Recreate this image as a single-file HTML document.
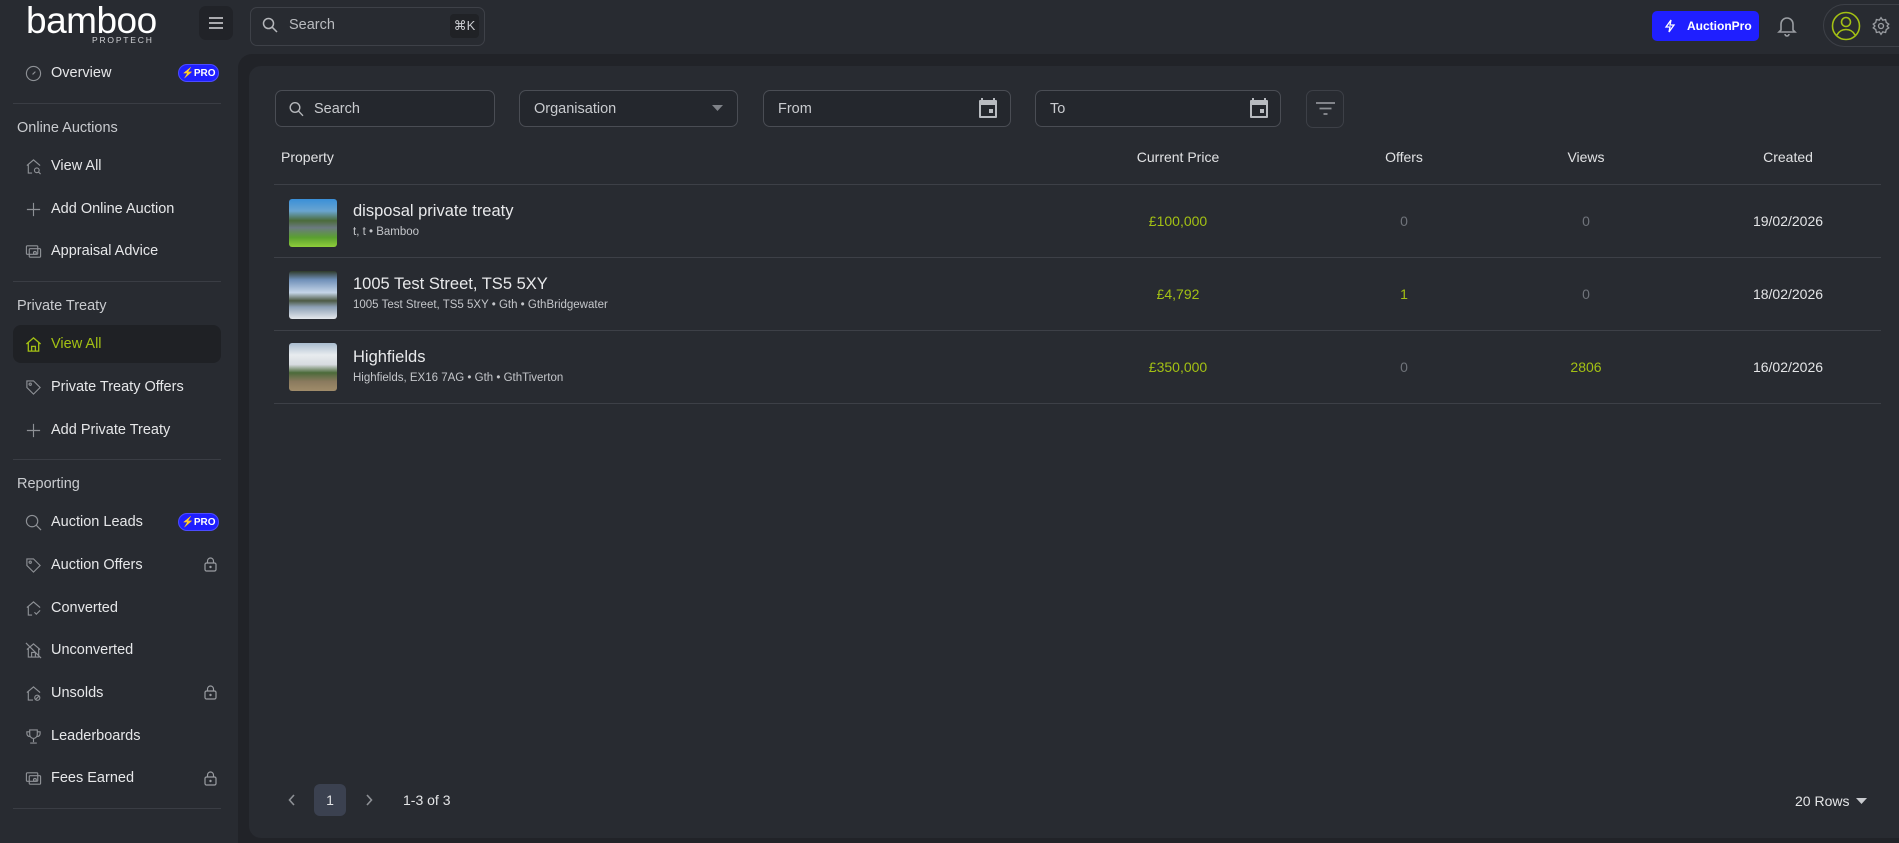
<!DOCTYPE html>
<html><head><meta charset="utf-8">
<style>
*{box-sizing:border-box;margin:0;padding:0}
body{width:1899px;height:843px;overflow:hidden;background:#282b31;font-family:"Liberation Sans",sans-serif;color:#e4e5e7;position:relative}
.a{position:absolute}
.nav{position:absolute;left:13px;width:208px;height:38px;display:flex;align-items:center;padding-left:12px;font-size:14.5px;color:#e6e7e9}
.nav svg{width:17px;height:17px;margin-right:9px;flex:none}
.sec{position:absolute;left:17px;font-size:14.5px;color:#c9cbcf}
.div{position:absolute;left:13px;width:208px;height:1px;background:#3a3d44}
.pro{position:absolute;left:178px;width:41px;height:18px;border-radius:9px;background:#1f1fff;border:1px solid #4c4cff;color:#fff;font-size:10px;font-weight:bold;display:flex;align-items:center;justify-content:center}
.lock{position:absolute;left:204px;width:13px;height:15px}
.inp{position:absolute;top:90px;height:37px;border:1px solid #4a4d54;border-radius:7px;background:#24272d;font-size:14.5px;color:#c9cbcf;display:flex;align-items:center}
.th{position:absolute;top:149px;font-size:14px;color:#e1e2e4}
.line{position:absolute;left:274px;width:1607px;height:1px;background:#3d4047}
.thumb{position:absolute;left:289px;width:48px;height:48px;border-radius:3px}
.t{position:absolute;left:353px;font-size:16.5px;color:#e8e9eb}
.s{position:absolute;left:353px;font-size:11.5px;color:#c4c6ca}
.c{position:absolute;font-size:14px;transform:translateX(-50%)}
.g{color:#a3c014}.m{color:#6f737a}
</style></head><body>
<!-- logo -->
<div class="a" style="left:26px;top:0px;font-size:37px;font-weight:normal;color:#fff;letter-spacing:-0.5px;">bamboo</div>
<div class="a" style="left:92px;top:35px;font-size:8.5px;letter-spacing:1.8px;color:#cfd0d3">PROPTECH</div>
<div class="a" style="left:199px;top:6px;width:34px;height:34px;border-radius:7px;background:#212328"></div>
<svg class="a" style="left:207px;top:14px" width="18" height="18" viewBox="0 0 18 18" stroke="#d7d8db" stroke-width="1.6"><path d="M2 4h14M2 9h14M2 14h14"/></svg>
<div class="a" style="left:250px;top:7px;width:235px;height:39px;border:1px solid #3e4148;border-radius:7px"></div>
<svg class="a" style="left:262px;top:17px" width="16" height="16" viewBox="0 0 16 16" fill="none" stroke="#b5b7bb" stroke-width="1.5"><circle cx="6.5" cy="6.5" r="5"/><path d="M10.3 10.3L15 15"/></svg>
<div class="a" style="left:289px;top:17px;font-size:14.5px;color:#b9bbbf">Search</div>
<div class="a" style="left:450px;top:14px;width:29px;height:24px;border-radius:4px;background:#202226;font-size:13px;color:#c9cbcf;display:flex;align-items:center;justify-content:center">⌘K</div>

<!-- top right -->
<div class="a" style="left:1652px;top:11px;width:107px;height:30px;border-radius:5px;background:#1f1fff;color:#fff;font-weight:bold;font-size:12px;display:flex;align-items:center;padding-left:12px">
<svg width="12" height="14" viewBox="0 0 12 14" fill="none" stroke="#fff" stroke-width="1.3" style="margin-right:11px"><path d="M7 1L2 8h4l-1 5 5-7H6z"/></svg>AuctionPro</div>
<svg class="a" style="left:1777px;top:15px" width="20" height="22" viewBox="0 0 20 22" fill="none" stroke="#9a9da2" stroke-width="1.6"><path d="M4 15V9a6 6 0 0112 0v6l2 2H2z"/><path d="M8 19a2 2 0 004 0"/></svg>
<div class="a" style="left:1823px;top:4px;width:100px;height:43px;border:1px solid #3d4047;border-radius:22px"></div>
<svg class="a" style="left:1831px;top:11px" width="30" height="30" viewBox="0 0 30 30" fill="none" stroke="#a3c014" stroke-width="1.6"><circle cx="15" cy="15" r="13.5"/><circle cx="15" cy="11" r="4.5"/><path d="M6 24c2-4 5-5.5 9-5.5s7 1.5 9 5.5"/></svg>
<svg class="a" style="left:1871px;top:16px" width="20" height="20" viewBox="0 0 24 24" fill="none" stroke="#9a9da2" stroke-width="1.6"><circle cx="12" cy="12" r="3"/><path d="M12 2l2 3 3.5-.8.8 3.5 3 2-2 2.3 2 2.3-3 2-.8 3.5-3.5-.8-2 3-2-3-3.5.8-.8-3.5-3-2 2-2.3-2-2.3 3-2 .8-3.5 3.5.8z"/></svg>

<!-- sidebar -->
<div class="nav" style="top:54px"><svg viewBox="0 0 18 18" fill="none" stroke="#8e9196" stroke-width="1.2"><circle cx="9" cy="9" r="7.5"/><path d="M8 10l3-3"/></svg>Overview</div>
<div class="pro" style="top:64px">⚡PRO</div>
<div class="div" style="top:103px"></div>
<div class="sec" style="top:120px">Online Auctions</div>
<div class="nav" style="top:147px"><svg viewBox="0 0 18 18" fill="none" stroke="#8e9196" stroke-width="1.2"><path d="M2 8l7-6 7 6M3.5 7v9h4"/><circle cx="12.5" cy="13" r="2.5"/><path d="M14.3 14.8L16.5 17"/></svg>View All</div>
<div class="nav" style="top:190px"><svg viewBox="0 0 18 18" fill="none" stroke="#8e9196" stroke-width="1.2"><path d="M9 2v14M2 9h14"/></svg>Add Online Auction</div>
<div class="nav" style="top:232px"><svg viewBox="0 0 18 18" fill="none" stroke="#8e9196" stroke-width="1.2"><rect x="1.5" y="3" width="12" height="9" rx="1"/><rect x="4.5" y="6" width="12" height="9" rx="1"/><circle cx="10.5" cy="10.5" r="1.5"/></svg>Appraisal Advice</div>
<div class="div" style="top:281px"></div>
<div class="sec" style="top:298px">Private Treaty</div>
<div class="a" style="left:13px;top:325px;width:208px;height:38px;border-radius:8px;background:#1f2125"></div>
<div class="nav" style="top:325px;color:#a3c014"><svg viewBox="0 0 18 18" fill="none" stroke="#a3c014" stroke-width="1.4"><path d="M1.5 8.5L9 2l7.5 6.5M3.5 7v9h11V7M7 16v-5h4v5"/></svg>View All</div>
<div class="nav" style="top:368px"><svg viewBox="0 0 18 18" fill="none" stroke="#8e9196" stroke-width="1.2"><path d="M2 2h7l7 7-7 7-7-7z"/><circle cx="5.5" cy="5.5" r="1.2"/></svg>Private Treaty Offers</div>
<div class="nav" style="top:411px"><svg viewBox="0 0 18 18" fill="none" stroke="#8e9196" stroke-width="1.2"><path d="M9 2v14M2 9h14"/></svg>Add Private Treaty</div>
<div class="div" style="top:459px"></div>
<div class="sec" style="top:476px">Reporting</div>
<div class="nav" style="top:503px"><svg viewBox="0 0 18 18" fill="none" stroke="#8e9196" stroke-width="1.2"><circle cx="7.5" cy="7.5" r="6"/><path d="M12 12l5 5"/></svg>Auction Leads</div>
<div class="pro" style="top:513px">⚡PRO</div>
<div class="nav" style="top:546px"><svg viewBox="0 0 18 18" fill="none" stroke="#8e9196" stroke-width="1.2"><path d="M2 2h7l7 7-7 7-7-7z"/><circle cx="5.5" cy="5.5" r="1.2"/></svg>Auction Offers</div>
<div class="nav" style="top:589px"><svg viewBox="0 0 18 18" fill="none" stroke="#8e9196" stroke-width="1.2"><path d="M2 8l7-6 7 6M3.5 7v9h4M10 13l2 2 4-4"/></svg>Converted</div>
<div class="nav" style="top:631px"><svg viewBox="0 0 18 18" fill="none" stroke="#8e9196" stroke-width="1.2"><path d="M2 8l7-6 7 6M3.5 7v9h11V7M7 16v-5h4v5M1 1l16 16"/></svg>Unconverted</div>
<div class="nav" style="top:674px"><svg viewBox="0 0 18 18" fill="none" stroke="#8e9196" stroke-width="1.2"><path d="M2 8l7-6 7 6M3.5 7v9h5"/><circle cx="13" cy="13.5" r="2.7"/><path d="M11.2 15.3l3.6-3.6"/></svg>Unsolds</div>
<div class="nav" style="top:717px"><svg viewBox="0 0 18 18" fill="none" stroke="#8e9196" stroke-width="1.2"><path d="M5 2h8v5a4 4 0 01-8 0zM5 4H2v2a3 3 0 003 3M13 4h3v2a3 3 0 01-3 3M9 11v4M5.5 16h7"/></svg>Leaderboards</div>
<div class="nav" style="top:759px"><svg viewBox="0 0 18 18" fill="none" stroke="#8e9196" stroke-width="1.2"><rect x="1.5" y="3" width="12" height="9" rx="1"/><rect x="4.5" y="6" width="12" height="9" rx="1"/><circle cx="10.5" cy="10.5" r="1.5"/></svg>Fees Earned</div>
<svg class="lock" style="top:557px" viewBox="0 0 13 15" fill="none" stroke="#9a9da2" stroke-width="1.2"><rect x="1" y="6" width="11" height="8" rx="1.5"/><path d="M3.5 6V4a3 3 0 016 0v2"/><circle cx="6.5" cy="10" r=".6" fill="#9a9da2"/></svg>
<svg class="lock" style="top:685px" viewBox="0 0 13 15" fill="none" stroke="#9a9da2" stroke-width="1.2"><rect x="1" y="6" width="11" height="8" rx="1.5"/><path d="M3.5 6V4a3 3 0 016 0v2"/><circle cx="6.5" cy="10" r=".6" fill="#9a9da2"/></svg>
<svg class="lock" style="top:771px" viewBox="0 0 13 15" fill="none" stroke="#9a9da2" stroke-width="1.2"><rect x="1" y="6" width="11" height="8" rx="1.5"/><path d="M3.5 6V4a3 3 0 016 0v2"/><circle cx="6.5" cy="10" r=".6" fill="#9a9da2"/></svg>
<div class="div" style="top:808px"></div>

<!-- main -->
<div class="a" style="left:238px;top:54px;width:1661px;height:789px;background:#212328;border-radius:14px 0 0 0"></div>
<div class="a" style="left:249px;top:66px;width:1650px;height:772px;background:#282b31;border-radius:12px 0 0 12px"></div>

<div class="inp" style="left:275px;width:220px;padding-left:38px">Search</div>
<svg class="a" style="left:289px;top:101px" width="15" height="16" viewBox="0 0 15 16" fill="none" stroke="#b5b7bb" stroke-width="1.4"><circle cx="6" cy="6.5" r="4.8"/><path d="M9.6 10.2L14 14.8"/></svg>
<div class="inp" style="left:519px;width:219px;padding-left:14px">Organisation</div>
<svg class="a" style="left:712px;top:105px" width="11" height="7" viewBox="0 0 11 7"><path d="M0 0h11L5.5 6z" fill="#7f8288"/></svg>
<div class="inp" style="left:763px;width:248px;padding-left:14px">From</div>
<div class="inp" style="left:1035px;width:246px;padding-left:14px">To</div>
<svg class="a" style="left:979px;top:98px" width="18" height="20" viewBox="0 0 18 20"><path d="M4 0v2h10V0h2v2h1a1 1 0 011 1v16a1 1 0 01-1 1H1a1 1 0 01-1-1V3a1 1 0 011-1h1V0zM2 7v11h14V7zm8 4h4v4h-4z" fill="#b8bbc0"/></svg>
<svg class="a" style="left:1250px;top:98px" width="18" height="20" viewBox="0 0 18 20"><path d="M4 0v2h10V0h2v2h1a1 1 0 011 1v16a1 1 0 01-1 1H1a1 1 0 01-1-1V3a1 1 0 011-1h1V0zM2 7v11h14V7zm8 4h4v4h-4z" fill="#b8bbc0"/></svg>
<div class="a" style="left:1306px;top:90px;width:38px;height:38px;border:1px solid #3d4047;border-radius:7px"></div>
<svg class="a" style="left:1316px;top:102px" width="19" height="13" viewBox="0 0 19 13" stroke="#8e9196" stroke-width="1.7"><path d="M0 1h19M3.5 6.5h12M7.5 12h4"/></svg>

<div class="th" style="left:281px">Property</div>
<div class="th" style="left:1178px;transform:translateX(-50%)">Current Price</div>
<div class="th" style="left:1404px;transform:translateX(-50%)">Offers</div>
<div class="th" style="left:1586px;transform:translateX(-50%)">Views</div>
<div class="th" style="left:1788px;transform:translateX(-50%)">Created</div>
<div class="line" style="top:184px"></div>
<div class="line" style="top:257px"></div>
<div class="line" style="top:330px"></div>
<div class="line" style="top:403px"></div>

<div class="thumb" style="top:199px;background:linear-gradient(180deg,#3a8fd8 0%,#6aa5d0 25%,#4b6b3a 45%,#6b7a80 60%,#5aa030 80%,#8fce3a 100%)"></div>
<div class="t" style="top:202px">disposal private treaty</div>
<div class="s" style="top:226px">t, t • Bamboo</div>
<div class="c g" style="left:1178px;top:213px">£100,000</div>
<div class="c m" style="left:1404px;top:213px">0</div>
<div class="c m" style="left:1586px;top:213px">0</div>
<div class="c" style="left:1788px;top:213px">19/02/2026</div>

<div class="thumb" style="top:271px;background:linear-gradient(180deg,#2f3a2a 0%,#6f8fb8 18%,#c5d5e8 45%,#4d5a45 62%,#8da0b5 75%,#e5e8ec 100%)"></div>
<div class="t" style="top:275px">1005 Test Street, TS5 5XY</div>
<div class="s" style="top:299px">1005 Test Street, TS5 5XY • Gth • GthBridgewater</div>
<div class="c g" style="left:1178px;top:286px">£4,792</div>
<div class="c g" style="left:1404px;top:286px">1</div>
<div class="c m" style="left:1586px;top:286px">0</div>
<div class="c" style="left:1788px;top:286px">18/02/2026</div>

<div class="thumb" style="top:343px;background:linear-gradient(180deg,#a9bccf 0%,#e8ecef 25%,#d7dbe0 45%,#4c6a3a 62%,#8a7a5e 80%,#a08c6a 100%)"></div>
<div class="t" style="top:348px">Highfields</div>
<div class="s" style="top:372px">Highfields, EX16 7AG • Gth • GthTiverton</div>
<div class="c g" style="left:1178px;top:359px">£350,000</div>
<div class="c m" style="left:1404px;top:359px">0</div>
<div class="c g" style="left:1586px;top:359px">2806</div>
<div class="c" style="left:1788px;top:359px">16/02/2026</div>

<!-- pagination -->
<svg class="a" style="left:288px;top:794px" width="8" height="12" viewBox="0 0 8 12" fill="none" stroke="#8e9196" stroke-width="1.6"><path d="M6 1L1.5 6 6 11"/></svg>
<div class="a" style="left:314px;top:784px;width:32px;height:32px;border-radius:6px;background:#3b4150;display:flex;align-items:center;justify-content:center;font-size:14px">1</div>
<svg class="a" style="left:365px;top:794px" width="8" height="12" viewBox="0 0 8 12" fill="none" stroke="#8e9196" stroke-width="1.6"><path d="M2 1l4.5 5L2 11"/></svg>
<div class="a" style="left:403px;top:792px;font-size:14px">1-3 of 3</div>
<div class="a" style="left:1795px;top:793px;font-size:14px">20 Rows</div>
<svg class="a" style="left:1856px;top:798px" width="11" height="6" viewBox="0 0 11 6"><path d="M0 0h11L5.5 6z" fill="#c9cbcf"/></svg>
</body></html>
